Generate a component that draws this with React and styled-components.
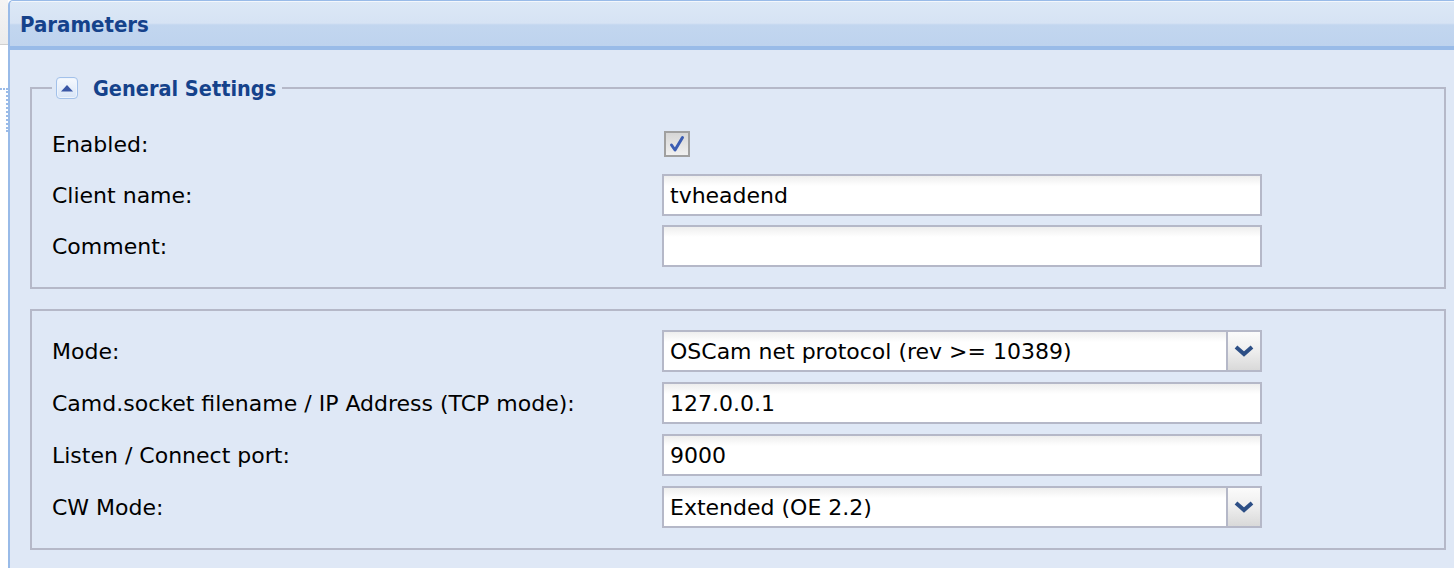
import React from "react";
import styled, { createGlobalStyle } from "styled-components";

const GlobalStyle = createGlobalStyle`
  html, body { margin: 0; padding: 0; background: #ffffff; }
  body { font-family: "DejaVu Sans", sans-serif; }
`;

const FONT = `"DejaVu Sans", sans-serif`;
const BOLD_FONT = `"DejaVu Sans Condensed", "DejaVu Sans", sans-serif`;

const Page = styled.div`
  display: flex;
  height: 568px;
  overflow: hidden;
`;

const LeftStrip = styled.div`
  width: 8px;
  flex: none;
  display: flex;
  flex-direction: column;
`;

const StripTop = styled.div`
  height: 44px;
  background: linear-gradient(#f4f4f4, #ececec);
  border-bottom: 1px solid #d0d0d0;
`;

const StripHandle = styled.div`
  margin-top: 43px;
  height: 42px;
  border-top: 2px dotted #9bbbe8;
  border-right: 2px dotted #9bbbe8;
`;

const Panel = styled.div`
  flex: 1;
  display: flex;
  flex-direction: column;
  border-left: 2px solid #99bbe8;
  border-top: 1px solid #99bbe8;
  border-top-left-radius: 5px;
  overflow: hidden;
  background: #dfe8f6;
`;

const PanelHeader = styled.div`
  height: 44px;
  flex: none;
  display: flex;
  align-items: center;
  padding-left: 10px;
  background: linear-gradient(#dce8f6 0%, #d6e3f4 48%, #c2d6ef 52%, #bed3ee 100%);
  border-top: 1px solid #f3f7fc;
  border-bottom: 4px solid #99bbe8;
  font-family: ${BOLD_FONT};
  font-weight: bold;
  font-size: 22px;
  color: #15428b;
`;

const PanelBody = styled.div`
  flex: 1;
  padding: 26px 8px 0 20px;
  display: flex;
  flex-direction: column;
  gap: 20px;
`;

const FieldSet = styled.fieldset`
  margin: 0;
  border: 2px solid #b5b8c8;
  padding: ${(p) => (p.$legend ? "23px 20px 20px 20px" : "19px 20px 20px 20px")};
  display: flex;
  flex-direction: column;
  gap: ${(p) => (p.$legend ? "9px" : "10px")};
  min-width: 0;
`;

const Legend = styled.legend`
  margin-left: 0;
  padding: 0 6px 0 4px;
  display: flex;
  align-items: center;
  gap: 15px;
  font-family: ${BOLD_FONT};
  font-weight: bold;
  font-size: 21.5px;
  color: #15428b;
  height: 24px;
`;

const ToggleButton = styled.span`
  width: 20px;
  height: 20px;
  border: 1px solid #a3c1ea;
  border-radius: 4px;
  background: linear-gradient(#f6f9fe, #d8e5f7);
  box-shadow: inset 0 0 0 1px #eef4fc;
  display: flex;
  align-items: center;
  justify-content: center;
`;

const Row = styled.div`
  display: flex;
  align-items: center;
  height: 42px;
`;

const Label = styled.label`
  width: 610px;
  flex: none;
  font-family: ${FONT};
  font-size: 22px;
  color: #000;
`;

const Input = styled.div`
  width: 596px;
  height: 38px;
  border: 2px solid #b5b8c8;
  background: linear-gradient(#eeeeee 0, #ffffff 10px, #ffffff 100%);
  display: flex;
  align-items: center;
  box-sizing: content-box;
`;

const InputText = styled.span`
  flex: 1;
  padding-left: 6px;
  font-family: ${FONT};
  font-size: 22px;
  color: #000;
  white-space: nowrap;
`;

const Trigger = styled.span`
  width: 32px;
  align-self: stretch;
  border-left: 2px solid #b5b8c8;
  background: linear-gradient(#fbfbfb 0%, #eeeeee 50%, #d9d9d9 100%);
  display: flex;
  align-items: center;
  justify-content: center;
`;

const CheckBox = styled.span`
  margin-left: 2px;
  width: 22px;
  height: 22px;
  border: 2px solid #a0a0a0;
  background: linear-gradient(#d6d6d6, #f0f0f0);
  display: flex;
  align-items: center;
  justify-content: center;
`;

const Chevron = () => (
  <svg width="20" height="12" viewBox="0 0 20 12">
    <path d="M2 2 L10 9 L18 2" fill="none" stroke="#2d4f86" strokeWidth="4" strokeLinejoin="miter" />
  </svg>
);

const UpArrow = () => (
  <svg width="12" height="8" viewBox="0 0 12 8">
    <path d="M0 7.5 L6 1 L12 7.5 Z" fill="#3a57a6" />
  </svg>
);

const Check = () => (
  <svg width="18" height="18" viewBox="0 0 18 18">
    <path d="M3.5 10 L7 15 L14.5 2.5" fill="none" stroke="#3b5db3" strokeWidth="3" strokeLinecap="round" strokeLinejoin="round" />
  </svg>
);

const TextField = ({ value }) => (
  <Input>
    <InputText>{value}</InputText>
  </Input>
);

const SelectField = ({ value }) => (
  <Input>
    <InputText>{value}</InputText>
    <Trigger>
      <Chevron />
    </Trigger>
  </Input>
);

export default function App() {
  return (
    <>
      <GlobalStyle />
      <Page>
        <LeftStrip>
          <StripTop />
          <StripHandle />
        </LeftStrip>
        <Panel>
          <PanelHeader>Parameters</PanelHeader>
          <PanelBody>
            <FieldSet $legend>
              <Legend>
                <ToggleButton>
                  <UpArrow />
                </ToggleButton>
                General Settings
              </Legend>
              <Row>
                <Label>Enabled:</Label>
                <CheckBox>
                  <Check />
                </CheckBox>
              </Row>
              <Row>
                <Label>Client name:</Label>
                <TextField value="tvheadend" />
              </Row>
              <Row>
                <Label>Comment:</Label>
                <TextField value="" />
              </Row>
            </FieldSet>
            <FieldSet>
              <Row>
                <Label>Mode:</Label>
                <SelectField value="OSCam net protocol (rev >= 10389)" />
              </Row>
              <Row>
                <Label>Camd.socket filename / IP Address (TCP mode):</Label>
                <TextField value="127.0.0.1" />
              </Row>
              <Row>
                <Label>Listen / Connect port:</Label>
                <TextField value="9000" />
              </Row>
              <Row>
                <Label>CW Mode:</Label>
                <SelectField value="Extended (OE 2.2)" />
              </Row>
            </FieldSet>
          </PanelBody>
        </Panel>
      </Page>
    </>
  );
}
